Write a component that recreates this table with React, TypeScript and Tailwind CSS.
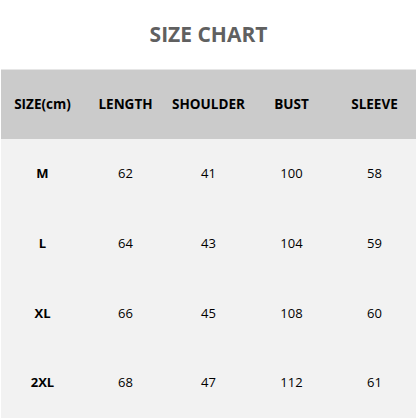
import React from "react";

const headers = ["SIZE(cm)", "LENGTH", "SHOULDER", "BUST", "SLEEVE"];

const rows = [
  ["M", "62", "41", "100", "58"],
  ["L", "64", "43", "104", "59"],
  ["XL", "66", "45", "108", "60"],
  ["2XL", "68", "47", "112", "61"],
];

export default function App() {
  return (
    <div className="w-[416px] h-[418px] flex flex-col bg-white border-l border-white font-['Open_Sans','Noto_Sans',sans-serif]">
      {/* Title */}
      <div className="h-[69px] flex items-center justify-center">
        <h1 className="text-[21px] font-bold text-[#606060]">SIZE CHART</h1>
      </div>

      {/* Header row */}
      <div className="h-[70px] grid grid-cols-5 items-center bg-[#cbcbcb] border-t border-[#e6e6e6]">
        {headers.map((h) => (
          <div key={h} className="text-center text-[13.5px] font-bold text-black">
            {h}
          </div>
        ))}
      </div>

      {/* Body */}
      <div className="flex-1 flex flex-col bg-[#f2f2f2]">
        {rows.map((r) => (
          <div key={r[0]} className="flex-1 grid grid-cols-5 items-center">
            {r.map((c, i) => (
              <div
                key={i}
                className={`text-center text-[13px] text-black ${i === 0 ? "font-bold" : "font-normal"}`}
              >
                {c}
              </div>
            ))}
          </div>
        ))}
      </div>
    </div>
  );
}
